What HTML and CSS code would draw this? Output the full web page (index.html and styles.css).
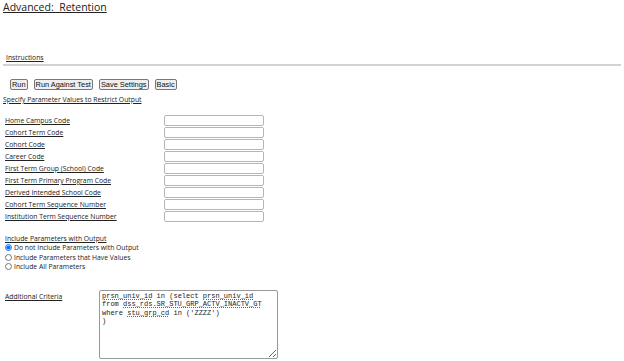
FILE: index.html
```html
<!DOCTYPE html>
<html lang="en">
<head>
    <meta charset="UTF-8">
    <title>Advanced: Retention</title>
    <link rel="stylesheet" href="styles.css">
</head>
<body>
    <h1 class="title">Advanced:&nbsp; Retention</h1>

    <div class="instructions">
        <a href="#">Instructions</a>
    </div>
    <hr class="rule">

    <div class="actions">
        <button class="btn">Run</button>
        <button class="btn">Run Against Test</button>
        <button class="btn">Save Settings</button>
        <button class="btn">Basic</button>
    </div>

    <div class="section-head">Specify Parameter Values to Restrict Output</div>

    <div class="params">
        <label class="param-label">Home Campus Code</label>
        <input class="param-input" type="text">
        <label class="param-label">Cohort Term Code</label>
        <input class="param-input" type="text">
        <label class="param-label">Cohort Code</label>
        <input class="param-input" type="text">
        <label class="param-label">Career Code</label>
        <input class="param-input" type="text">
        <label class="param-label">First Term Group (School) Code</label>
        <input class="param-input" type="text">
        <label class="param-label">First Term Primary Program Code</label>
        <input class="param-input" type="text">
        <label class="param-label">Derived Intended School Code</label>
        <input class="param-input" type="text">
        <label class="param-label">Cohort Term Sequence Number</label>
        <input class="param-input" type="text">
        <label class="param-label">Institution Term Sequence Number</label>
        <input class="param-input" type="text">
    </div>

    <div class="include">
        <div class="include-head">Include Parameters with Output</div>
        <label class="radio"><input type="radio" name="inc" checked> Do not Include Parameters with Output</label>
        <label class="radio"><input type="radio" name="inc"> Include Parameters that Have Values</label>
        <label class="radio"><input type="radio" name="inc"> Include All Parameters</label>
    </div>

    <div class="criteria">
        <div class="criteria-label">Additional Criteria</div>
        <div class="criteria-box"><span class="spell">prsn_univ_id</span> in (select <span class="spell">prsn_univ_id</span>
from <span class="spell">dss_rds.SR_STU_GRP_ACTV_INACTV_GT</span>
where <span class="spell">stu_grp_cd</span> in ('ZZZZ')
)</div>
    </div>
</body>
</html>
```

FILE: styles.css
```css
* {
    box-sizing: border-box;
}

body {
    margin: 0;
    padding: 0 3px;
    font-family: 'Open Sans', sans-serif;
    font-size: 6.8px;
    color: #222;
    background: #fff;
}

.title {
    margin: 0;
    padding-top: 1px;
    font-size: 10.5px;
    font-weight: normal;
    line-height: 13px;
    text-decoration: underline;
}

.instructions {
    margin-top: 39px;
    padding-left: 3px;
    line-height: 10px;
}

.instructions a {
    color: #222;
}

.rule {
    margin: 1px 0 0;
    border: 0;
    border-top: 2px solid #d3d3d3;
}

.actions {
    display: flex;
    gap: 6px;
    margin-top: 13px;
    padding-left: 7px;
}

.btn {
    font-family: 'Liberation Sans', sans-serif;
    font-size: 7.4px;
    height: 11px;
    padding: 0 1px;
    line-height: 9px;
    background: #efefef;
    border: 1px solid #777;
    border-radius: 2px;
    color: #111;
}

.section-head {
    margin-top: 5px;
    line-height: 10px;
    text-decoration: underline;
}

.params {
    display: grid;
    grid-template-columns: 159px 100px;
    grid-auto-rows: 11px;
    row-gap: 1px;
    margin-top: 10px;
    padding-left: 2px;
}

.param-label {
    line-height: 11px;
    text-decoration: underline;
}

.param-input {
    height: 11px;
    margin: 0;
    border: 1px solid #b5b5b5;
    border-radius: 2px;
    background: #fff;
}

.include {
    margin-top: 13px;
    padding-left: 2px;
}

.include-head {
    line-height: 8px;
    text-decoration: underline;
}

.radio {
    display: flex;
    align-items: center;
    gap: 2px;
    height: 9.5px;
    line-height: 9px;
}

.radio input {
    width: 7px;
    height: 7px;
    margin: 0;
}

.criteria {
    display: flex;
    margin-top: 18px;
    padding-left: 2px;
}

.criteria-label {
    width: 94px;
    padding-top: 2px;
    line-height: 9px;
    text-decoration: underline;
}

.criteria-box {
    width: 179px;
    height: 69px;
    padding: 1px 2px;
    border: 1px solid #999;
    border-radius: 2px;
    font-family: 'Liberation Mono', monospace;
    font-size: 7px;
    line-height: 8.5px;
    white-space: pre;
    resize: both;
    overflow: hidden;
}

.spell {
    text-decoration: underline dotted #e03030;
    text-decoration-thickness: 1px;
    text-underline-offset: 1px;
}
```
